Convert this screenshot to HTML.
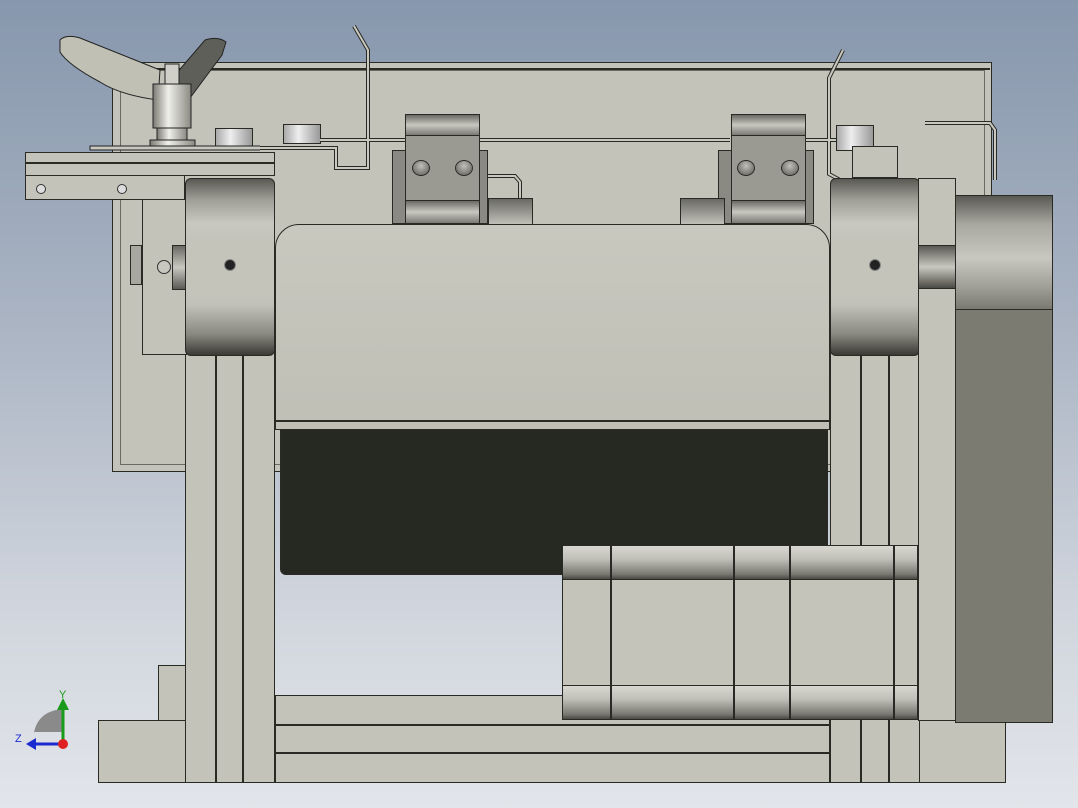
<!DOCTYPE html>
<html><head><meta charset="utf-8"><style>
html,body{margin:0;padding:0}
body{width:1078px;height:808px;position:relative;overflow:hidden;
background:linear-gradient(180deg,#8797ad 0%,#aab4c3 40%,#d0d5dd 75%,#e2e5ea 100%);font-family:"Liberation Sans",sans-serif}
.b{position:absolute;box-sizing:border-box;border:1px solid #2a2a24}
.p{background:#c3c3ba}
.roll{background:linear-gradient(180deg,#5a5a54 0%,#a0a098 12%,#c8c8c0 25%,#c4c4bb 34%,#c4c4bb 66%,#c0c0b8 72%,#8a8a82 88%,#3a3a34 100%)}
.hcyl{background:linear-gradient(180deg,#d8d8d0 0%,#c0c0b8 40%,#7a7a72 85%,#4a4a44 100%)}
.band{background:linear-gradient(180deg,#6a6a64,#c8c8c0 50%,#7a7a72)}
.hole{position:absolute;width:18px;height:16px;border-radius:50%;border:1px solid #2a2a24;background:radial-gradient(circle at 50% 35%,#c0c0b8,#5a5a54);box-sizing:border-box}
</style></head><body>
<!-- back plate -->
<div class="b p" style="left:112px;top:62px;width:880px;height:410px"></div>
<div class="b" style="left:112px;top:68px;width:878px;height:1px"></div>
<div class="b" style="left:120px;top:70px;width:865px;height:395px;border-color:#6a6a62;background:transparent"></div>
<!-- base plate -->
<div class="b p" style="left:98px;top:720px;width:908px;height:63px"></div>
<div class="b p" style="left:158px;top:665px;width:28px;height:56px"></div>
<!-- posts -->
<div class="b p" style="left:185px;top:340px;width:90px;height:443px"></div>
<div class="b" style="left:215px;top:355px;width:1px;height:428px"></div>
<div class="b" style="left:242px;top:355px;width:1px;height:428px"></div>
<div class="b p" style="left:830px;top:340px;width:90px;height:443px"></div>
<div class="b" style="left:860px;top:355px;width:1px;height:428px"></div>
<div class="b" style="left:888px;top:355px;width:1px;height:428px"></div>
<!-- bottom rails -->
<div class="b p" style="left:275px;top:695px;width:555px;height:30px"></div>
<div class="b p" style="left:275px;top:725px;width:555px;height:28px"></div>
<div class="b p" style="left:275px;top:753px;width:555px;height:30px"></div>
<!-- left bracket -->
<div class="b p" style="left:142px;top:195px;width:45px;height:160px"></div>
<div class="b p" style="left:25px;top:152px;width:250px;height:24px"></div>
<div class="b" style="left:25px;top:162px;width:250px;height:1px"></div>
<div class="b p" style="left:25px;top:175px;width:160px;height:25px"></div>
<div style="position:absolute;left:36px;top:184px;width:8px;height:8px;border-radius:50%;border:1px solid #333;background:#ddd"></div>
<div style="position:absolute;left:117px;top:184px;width:8px;height:8px;border-radius:50%;border:1px solid #333;background:#ddd"></div>
<div class="b" style="left:130px;top:245px;width:12px;height:40px;background:#a8a8a0"></div>
<div style="position:absolute;left:157px;top:260px;width:12px;height:12px;border-radius:50%;border:1px solid #333;background:#c8c8c0"></div>
<!-- bolts -->
<div class="b" style="left:215px;top:128px;width:38px;height:22px;background:linear-gradient(90deg,#aaa,#eee 40%,#999)"></div>
<div class="b" style="left:283px;top:124px;width:38px;height:20px;background:linear-gradient(90deg,#aaa,#eee 40%,#999)"></div>
<div class="b" style="left:836px;top:125px;width:38px;height:26px;background:linear-gradient(90deg,#aaa,#eee 40%,#999)"></div>
<!-- wires -->
<svg style="position:absolute;left:0;top:0" width="1078" height="240">
<g fill="none" stroke="#2a2a24" stroke-width="4">
<path d="M354 26 L368 50 L368 168 L336 168 L336 148 L250 148"/>
<path d="M843 50 L829 78 L829 174 L840 180"/>
<path d="M925 123 L990 123 L995 130 L995 180"/>
<path d="M485 176 L515 176 L520 182 L520 200"/>
<path d="M320 140 L405 140 M480 140 L730 140 M805 140 L836 140"/>
</g>
<g fill="none" stroke="#c8c8c0" stroke-width="2">
<path d="M354 26 L368 50 L368 168 L336 168 L336 148 L250 148"/>
<path d="M843 50 L829 78 L829 174 L840 180"/>
<path d="M925 123 L990 123 L995 130 L995 180"/>
<path d="M485 176 L515 176 L520 182 L520 200"/>
<path d="M320 140 L405 140 M480 140 L730 140 M805 140 L836 140"/>
</g>
</svg>
<!-- pulley brackets -->
<div class="b" style="left:392px;top:150px;width:96px;height:74px;background:#8a8a82"></div>
<div class="b" style="left:405px;top:114px;width:75px;height:110px;background:#9a9a92"></div>
<div class="b band" style="left:405px;top:114px;width:75px;height:22px"></div>
<div class="b band" style="left:405px;top:200px;width:75px;height:24px"></div>
<div class="hole" style="left:412px;top:160px"></div><div class="hole" style="left:455px;top:160px"></div>
<div class="b" style="left:488px;top:198px;width:45px;height:27px;background:linear-gradient(180deg,#6a6a64,#c0c0b8)"></div>
<div class="b" style="left:718px;top:150px;width:96px;height:74px;background:#8a8a82"></div>
<div class="b" style="left:731px;top:114px;width:75px;height:110px;background:#9a9a92"></div>
<div class="b band" style="left:731px;top:114px;width:75px;height:22px"></div>
<div class="b band" style="left:731px;top:200px;width:75px;height:24px"></div>
<div class="hole" style="left:737px;top:160px"></div><div class="hole" style="left:781px;top:160px"></div>
<div class="b" style="left:680px;top:198px;width:45px;height:27px;background:linear-gradient(180deg,#6a6a64,#c0c0b8)"></div>
<div class="b p" style="left:852px;top:146px;width:46px;height:32px"></div>
<!-- rollers -->
<div class="b roll" style="left:185px;top:178px;width:90px;height:178px;border-radius:6px"></div>
<div class="b" style="left:172px;top:245px;width:14px;height:45px;background:linear-gradient(180deg,#6a6a64,#c8c8c0 50%,#5a5a54)"></div>
<div class="b roll" style="left:830px;top:178px;width:90px;height:178px;border-radius:6px"></div>
<div style="position:absolute;left:224px;top:259px;width:10px;height:10px;border-radius:50%;background:#222;border:1px solid #888"></div>
<div style="position:absolute;left:869px;top:259px;width:10px;height:10px;border-radius:50%;background:#222;border:1px solid #888"></div>
<!-- cover -->
<div class="b" style="left:275px;top:224px;width:555px;height:206px;border-radius:24px 24px 0 0;background:linear-gradient(180deg,#c8c8bf,#bfbfb6)"></div>
<div class="b" style="left:275px;top:420px;width:555px;height:1px"></div>
<!-- belt -->
<div class="b" style="left:280px;top:430px;width:548px;height:145px;background:#262822;border-radius:0 0 6px 6px"></div>
<!-- right plate & motor -->
<div class="b p" style="left:918px;top:178px;width:38px;height:543px"></div>
<div class="b" style="left:918px;top:245px;width:38px;height:44px;background:linear-gradient(180deg,#5a5a54,#c8c8c0 50%,#4a4a44)"></div>
<div class="b" style="left:955px;top:195px;width:98px;height:528px;background:#7b7b72"></div>
<div class="b" style="left:955px;top:195px;width:98px;height:115px;background:linear-gradient(180deg,#5a5a54 0%,#a8a8a0 25%,#c8c8c0 55%,#a0a098 80%,#7a7a72 100%)"></div>
<!-- bottom motor -->
<div class="b" style="left:562px;top:545px;width:356px;height:175px;background:#c4c4bb"></div>
<div class="b hcyl" style="left:562px;top:545px;width:356px;height:35px"></div>
<div class="b hcyl" style="left:562px;top:685px;width:356px;height:35px"></div>
<div class="b" style="left:610px;top:545px;width:1px;height:175px"></div>
<div class="b" style="left:733px;top:545px;width:2px;height:175px"></div>
<div class="b" style="left:789px;top:545px;width:2px;height:175px"></div>
<div class="b" style="left:893px;top:545px;width:1px;height:175px"></div>
<!-- clamp handle -->
<svg style="position:absolute;left:0;top:0" width="260" height="160">
<path d="M175 75 L205 40 Q218 36 226 42 L222 55 L190 98 L175 95 Z" fill="#5f5f5a" stroke="#222"/>
<path d="M60 40 Q66 34 80 38 L160 70 L158 100 Q120 95 100 82 Q68 65 60 52 Z" fill="#c0c0b4" stroke="#222"/>
<rect x="165" y="64" width="14" height="20" fill="#d0d0c8" stroke="#222"/>
<rect x="153" y="84" width="38" height="44" fill="url(#g)" stroke="#222"/>
<rect x="157" y="128" width="30" height="12" fill="url(#g)" stroke="#222"/>
<rect x="150" y="140" width="45" height="8" fill="url(#g)" stroke="#222"/>
<rect x="90" y="146" width="180" height="4" fill="#c8c8c0" stroke="#222"/>
<defs><linearGradient id="g" x1="0" x2="1"><stop offset="0" stop-color="#7a7a72"/><stop offset=".4" stop-color="#f0f0ea"/><stop offset="1" stop-color="#8a8a82"/></linearGradient></defs>
</svg>
<!-- axes -->
<svg style="position:absolute;left:12px;top:686px" width="70" height="70">
<path d="M22 46 Q26 28 44 24 L50 24 L50 46 Z" fill="#8a8a8a"/>
<line x1="51" y1="58" x2="51" y2="22" stroke="#1a9a1a" stroke-width="3"/>
<polygon points="45,24 57,24 51,12" fill="#1a9a1a"/>
<line x1="51" y1="58" x2="24" y2="58" stroke="#1a2ad0" stroke-width="3"/>
<polygon points="24,52 24,64 14,58" fill="#1a2ad0"/>
<circle cx="51" cy="58" r="5" fill="#e02020"/>
<text x="47" y="12" font-size="11" fill="#1a9a1a" font-family="Liberation Sans">Y</text>
<text x="3" y="56" font-size="11" fill="#1a2ad0" font-family="Liberation Sans">Z</text>
</svg>
</body></html>
